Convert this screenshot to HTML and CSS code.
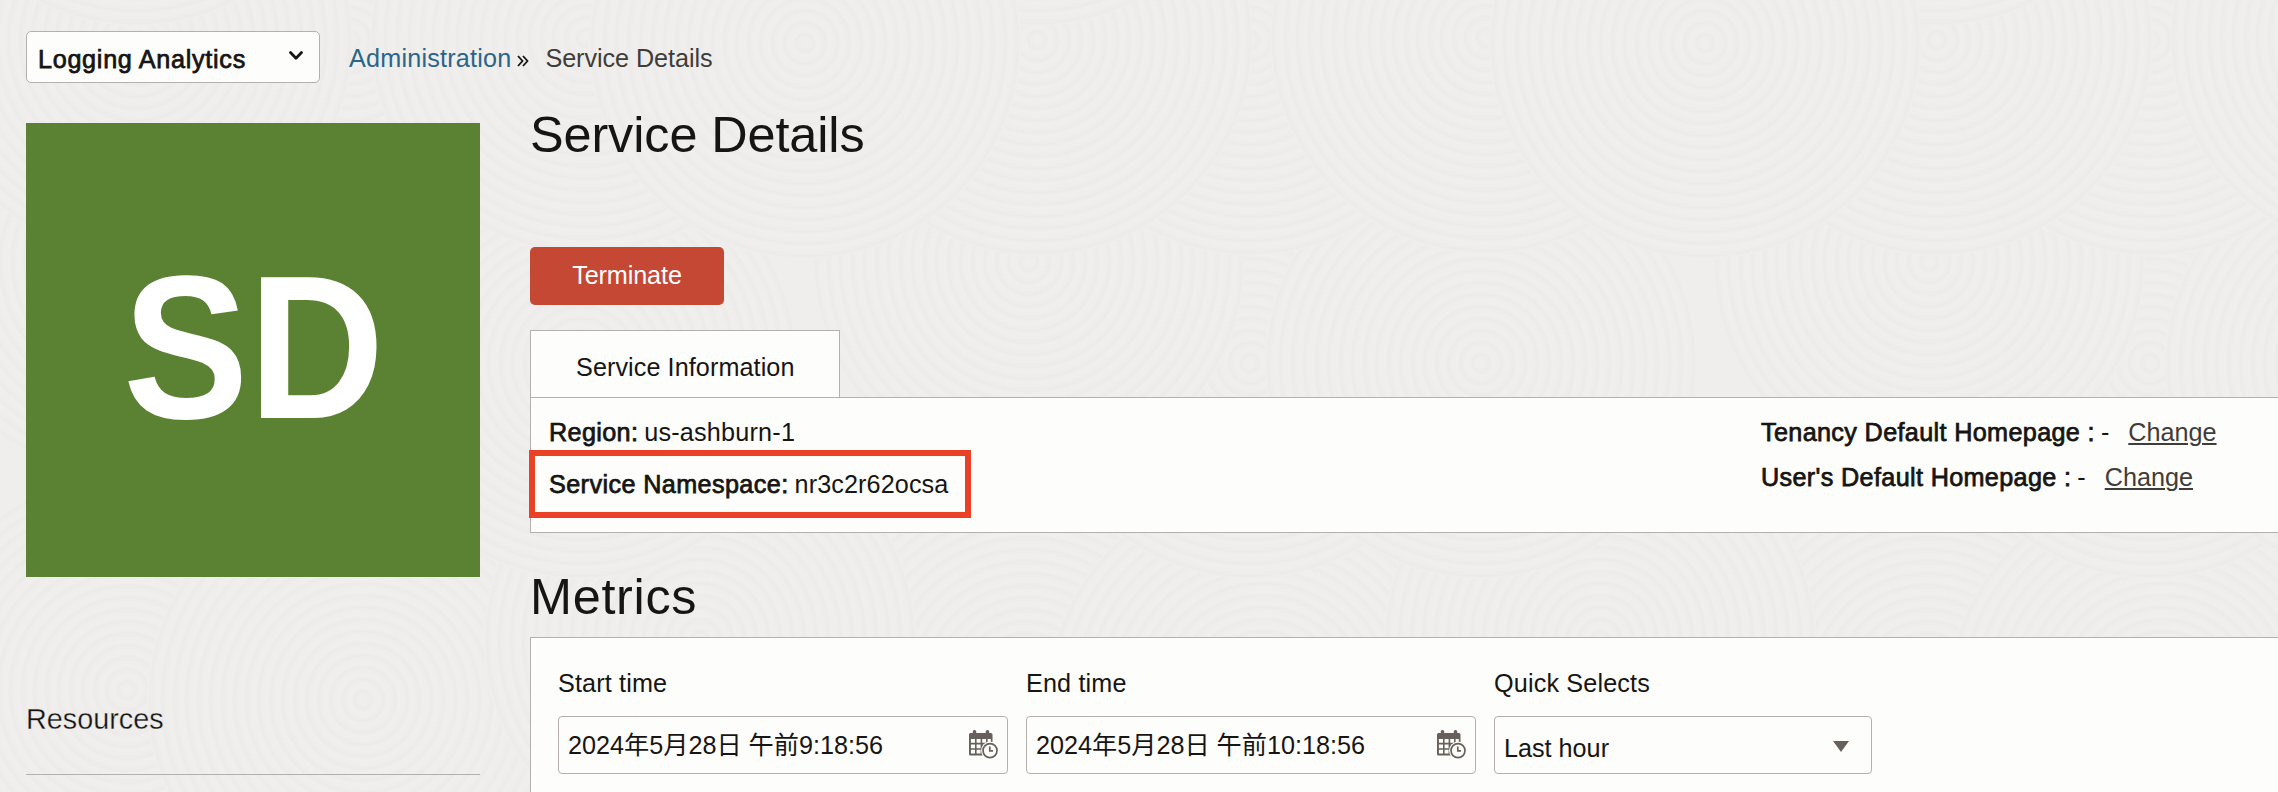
FILE: index.html
```html
<!DOCTYPE html>
<html lang="en">
<head>
<meta charset="utf-8">
<title>Service Details</title>
<link rel="stylesheet" href="styles.css">
</head>
<body>
<svg class="texture" width="2278" height="792" viewBox="0 0 2278 792" aria-hidden="true">
  <defs>
    <radialGradient id="rings" gradientUnits="userSpaceOnUse" cx="0" cy="0" r="12" spreadMethod="repeat">
      <stop offset="0" stop-color="#f0efed"/>
      <stop offset=".4" stop-color="#efeeec"/>
      <stop offset=".75" stop-color="#ecebe9"/>
      <stop offset="1" stop-color="#f0efed"/>
    </radialGradient>
    <circle id="disc" r="216" fill="url(#rings)"/>
    <g id="tile">
      <use href="#disc" x="360" y="860"/>
      <use href="#disc" x="800" y="880"/>
      <use href="#disc" x="127" y="690"/>
      <use href="#disc" x="363" y="700"/>
      <use href="#disc" x="700" y="640"/>
      <use href="#disc" x="350" y="363"/>
      <use href="#disc" x="581" y="363"/>
      <use href="#disc" x="129" y="262"/>
      <use href="#disc" x="350" y="40"/>
      <use href="#disc" x="586" y="38"/>
      <use href="#disc" x="137" y="40"/>
      <use href="#disc" x="805" y="43"/>
      <use href="#disc" x="137" y="-190"/>
    </g>
  </defs>
  <use href="#tile" x="-900"/>
  <use href="#tile" x="1800"/>
  <use href="#tile" x="900"/>
  <use href="#tile"/>
</svg>

<div class="page">
  <header class="topbar">
    <div class="service-select">
      <span class="medium service-name">Logging Analytics</span>
      <svg class="chevron" width="16" height="11" viewBox="0 0 16 11"><path d="M2.5 2.5 8 8.2 13.5 2.5" fill="none" stroke="#161513" stroke-width="2.8" stroke-linecap="round" stroke-linejoin="round"/></svg>
    </div>
    <nav class="crumbs">
      <a class="crumb-link">Administration</a>
      <svg class="crumb-sep" width="12" height="12" viewBox="0 0 12 12"><path d="M1 1 5.5 6 1 11M6 1 10.5 6 6 11" fill="none" stroke="#161513" stroke-width="1.8"/></svg>
      <span class="crumb-current">Service Details</span>
    </nav>
  </header>

  <div class="columns">
    <aside class="side">
      <div class="badge"><span class="initials">SD</span></div>
      <h2 class="resources">Resources</h2>
    </aside>

    <main class="content">
      <h1 class="title">Service Details</h1>
      <button class="terminate">Terminate</button>
      <div class="tab">Service Information</div>
      <section class="info">
        <div class="info-left">
          <div class="row"><span class="medium region">Region:</span><span class="region-value">us-ashburn-1</span></div>
          <div class="highlight"><span class="medium namespace">Service Namespace:</span><span class="namespace-value">nr3c2r62ocsa</span></div>
        </div>
        <div class="info-right">
          <div class="row"><span class="medium homepage">Tenancy Default Homepage :</span><span class="dash">-</span><a class="change">Change</a></div>
          <div class="row"><span class="medium homepage">User's Default Homepage :</span><span class="dash">-</span><a class="change">Change</a></div>
        </div>
      </section>
      <h1 class="title metrics-title">Metrics</h1>
      <section class="metrics">
        <div class="field">
          <label>Start time</label>
          <div class="input date"><span>2024年5月28日 午前9:18:56</span>
            <svg width="29" height="29" viewBox="0 0 29 29"><use href="#calendar"/></svg></div>
        </div>
        <div class="field">
          <label>End time</label>
          <div class="input date"><span>2024年5月28日 午前10:18:56</span>
            <svg width="29" height="29" viewBox="0 0 29 29"><use href="#calendar"/></svg></div>
        </div>
        <div class="field quick">
          <label>Quick Selects</label>
          <div class="input select"><span>Last hour</span>
            <svg width="16" height="11" viewBox="0 0 16 11"><path d="M0 0H16L8 11Z" fill="#67605b"/></svg></div>
        </div>
      </section>
    </main>
  </div>
</div>

<svg width="0" height="0" class="symbols">
  <defs>
    <g id="calendar">
      <rect x="3.8" y="0" width="3.4" height="5" rx="1.5" fill="#67605b"/>
      <rect x="16.8" y="0" width="3.4" height="5" rx="1.5" fill="#67605b"/>
      <path d="M1.5 3H22A1.5 1.5 0 0 1 23.5 4.5V24A1.5 1.5 0 0 1 22 25.5H1.5A1.5 1.5 0 0 1 0 24V4.5A1.5 1.5 0 0 1 1.5 3Z" fill="#67605b"/>
      <path d="M1.9 9H6V12.8H1.9ZM7.6 9H11.6V12.8H7.6ZM13.2 9H17V12.8H13.2ZM18.6 9H21.8V12.8H18.6ZM1.9 14.4H6V18.2H1.9ZM7.6 14.4H11.6V18.2H7.6ZM1.9 19.8H6V23.6H1.9ZM7.6 19.8H11.6V23.6H7.6Z" fill="#fdfdfb"/>
      <circle cx="21" cy="20.6" r="9" fill="#fdfdfb"/>
      <circle cx="21" cy="20.6" r="7" fill="none" stroke="#67605b" stroke-width="1.7"/>
      <path d="M20.8 16.5V20.8H24" fill="none" stroke="#67605b" stroke-width="1.7"/>
    </g>
  </defs>
</svg>
</body>
</html>
```
FILE: styles.css
```css
* { box-sizing: border-box; }
body {
  margin: 0;
  width: 2278px;
  height: 792px;
  overflow: hidden;
  background: #efeeec;
  color: #161513;
  font: 25.2px/30px "Liberation Sans", "Noto Sans CJK JP", sans-serif;
}
.texture { position: absolute; left: 0; top: 0; z-index: -1; }
.symbols { position: absolute; }
.page { height: 792px; overflow: hidden; padding: 31px 0 0 26px; }
.medium { -webkit-text-stroke: .75px currentColor; }

.topbar { display: flex; height: 52px; }
.service-select {
  width: 294px;
  height: 52px;
  padding: 12px 15px 0 11px;
  display: flex;
  justify-content: space-between;
  background: #fdfdfb;
  border: 1px solid #b5b0ad;
  border-radius: 5px;
}
.service-name { letter-spacing: .7px; }
.chevron { margin-top: 6px; }
.crumbs { display: flex; padding: 12px 0 0 29px; }
.crumb-link { color: #2b6489; letter-spacing: .2px; }
.crumb-sep { margin: 12px 16px 0 6px; }
.crumb-current { color: #403c38; letter-spacing: -.05px; }

.columns { display: grid; grid-template-columns: 454px 1780px; column-gap: 50px; padding-top: 22px; }
.side { padding-top: 18px; }
.badge {
  height: 454px;
  display: flex;
  justify-content: center;
  background: #5b8232;
  color: #fff;
  font-size: 194px;
  font-weight: bold;
  line-height: 220px;
  padding: 118px 0 0 1px;
}
.initials { height: 220px; transform: scale(.97, 1.05); transform-origin: 50% 177px; }
.resources {
  margin: 125px 0 0;
  padding-bottom: 38px;
  border-bottom: 1px solid #b3b1ae;
  font-size: 28.8px;
  line-height: 34px;
  font-weight: normal;
  -webkit-text-stroke: .3px #efeeec;
}

.content { display: flex; flex-direction: column; align-items: flex-start; }
.title { margin: 0; font-size: 50.4px; line-height: 60px; font-weight: normal; letter-spacing: -.1px; }
.terminate {
  margin: 82px 0 25px;
  padding: 0 0 2px;
  width: 194px;
  height: 58px;
  border: 0;
  border-radius: 5px;
  background: #c44834;
  color: #fff;
  font: inherit;
  letter-spacing: -.1px;
}
.tab {
  width: 310px;
  height: 67px;
  padding: 21px 0 0 45px;
  border: 1px solid #b5b0ad;
  border-bottom: 0;
  background: #fdfdfb;
  letter-spacing: .08px;
}
.info {
  width: 1780px;
  height: 136px;
  display: flex;
  border: 1px solid #b5b0ad;
  background: #fdfdfb;
}
.info-left { width: 1230px; padding-top: 19px; }
.info-left .row { padding-left: 18px; }
.row { display: flex; height: 30px; }
.region { margin-right: 6px; letter-spacing: .35px; }
.region-value { letter-spacing: .2px; }
.namespace { margin-right: 6px; letter-spacing: .4px; }
.namespace-value { letter-spacing: .1px; }
.highlight {
  display: flex;
  width: 442px;
  height: 68px;
  margin: 3px 0 0 -2px;
  padding: 13px 0 0 14px;
  border: 6px solid #ea4025;
}
.info-right { padding-top: 19px; }
.info-right .row { margin-bottom: 15px; }
.homepage { letter-spacing: .35px; }
.dash { margin: 0 19px 0 6px; }
.change { color: #403c38; text-decoration: underline; text-decoration-thickness: 2px; text-underline-offset: 2px; }

.metrics-title { margin-top: 34px; letter-spacing: .7px; }
.metrics {
  width: 1780px;
  height: 200px;
  margin-top: 10px;
  padding: 30px 0 0 27px;
  display: flex;
  gap: 18px;
  border: 1px solid #b5b0ad;
  background: #fdfdfb;
}
.field { width: 450px; }
.quick { width: 378px; }
.field label { display: block; height: 30px; letter-spacing: .15px; }
.input {
  height: 58px;
  margin-top: 18px;
  display: flex;
  justify-content: space-between;
  border: 1px solid #b5b0ad;
  border-radius: 4px;
}
.date { padding: 13px 9px 0 9px; }
.select { padding: 16px 22px 0 9px; }
.select svg { margin-top: 8px; }
```
